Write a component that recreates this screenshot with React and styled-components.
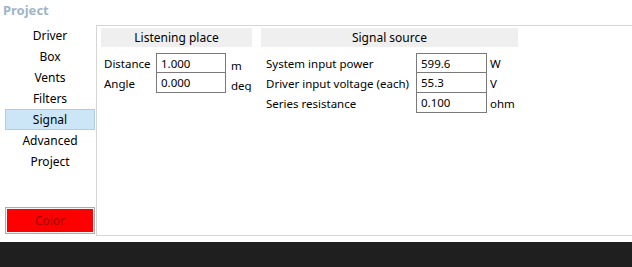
import React from 'react';
import styled, { createGlobalStyle } from 'styled-components';

const GlobalStyle = createGlobalStyle`
  html, body {
    margin: 0;
    padding: 0;
    background: #ffffff;
  }
  body {
    font-family: "Noto Sans", "Open Sans", sans-serif;
    font-size: 11.5px;
    color: #000;
  }
`;

const listening = [
  { label: 'Distance', value: '1.000', unit: 'm' },
  { label: 'Angle', value: '0.000', unit: 'deg' },
];

const source = [
  { label: 'System input power', value: '599.6', unit: 'W' },
  { label: 'Driver input voltage (each)', value: '55.3', unit: 'V' },
  { label: 'Series resistance', value: '0.100', unit: 'ohm' },
];

const navItems = ['Driver', 'Box', 'Vents', 'Filters', 'Signal', 'Advanced', 'Project'];

export default function App() {
  const [active, setActive] = React.useState('Signal');

  return (
    <>
      <GlobalStyle />
      <Window>
        <Title>Project</Title>
        <Body>
          <Sidebar>
            <NavList>
              {navItems.map((item) => (
                <NavItem key={item} $active={item === active} onClick={() => setActive(item)}>
                  {item}
                </NavItem>
              ))}
            </NavList>
            <ColorButton>Color</ColorButton>
          </Sidebar>
          <Panel>
            <Group $cols="55px 70px 26px">
              <GroupHeader>Listening place</GroupHeader>
              {listening.map((row, i) => (
                <React.Fragment key={row.label}>
                  <Label $pad={3}>{row.label}</Label>
                  <Field $first={i === 0}>{row.value}</Field>
                  <Unit $pad={5} $drop={4} $clip={19}>{row.unit}</Unit>
                </React.Fragment>
              ))}
            </Group>
            <Group $cols="155px 71px 31px">
              <GroupHeader>Signal source</GroupHeader>
              {source.map((row, i) => (
                <React.Fragment key={row.label}>
                  <Label $pad={5}>{row.label}</Label>
                  <Field $first={i === 0}>{row.value}</Field>
                  <Unit $pad={3} $drop={2} $clip={20}>{row.unit}</Unit>
                </React.Fragment>
              ))}
            </Group>
          </Panel>
        </Body>
        <Spacer />
        <Taskbar />
      </Window>
    </>
  );
}

const Window = styled.div`
  width: 632px;
  height: 267px;
  display: flex;
  flex-direction: column;
  background: #ffffff;
  overflow: hidden;
`;

const Title = styled.div`
  height: 25px;
  padding: 1px 0 0 3px;
  box-sizing: border-box;
  font-size: 13px;
  font-weight: 700;
  color: #9fb4c9;
  line-height: 18px;
`;

const Body = styled.div`
  height: 211px;
  display: flex;
`;

const Sidebar = styled.div`
  width: 96px;
  padding: 0 1px 2px 5px;
  box-sizing: border-box;
  display: flex;
  flex-direction: column;
  justify-content: space-between;
`;

const NavList = styled.div`
  display: flex;
  flex-direction: column;
`;

const NavItem = styled.div`
  height: 21px;
  box-sizing: border-box;
  display: flex;
  align-items: center;
  justify-content: center;
  line-height: 1;
  font-size: 12px;
  cursor: pointer;
  border: 1px solid ${(p) => (p.$active ? '#a9cdea' : 'transparent')};
  background: ${(p) => (p.$active ? '#cde6f7' : 'transparent')};
`;

const ColorButton = styled.button`
  height: 27px;
  width: 90px;
  padding: 0;
  border: 1px solid #adadad;
  box-shadow: inset 0 0 0 1px #f4f4f4;
  background: #ff0000;
  color: #a00000;
  font-family: inherit;
  font-size: 12px;
`;

const Panel = styled.div`
  flex: 1;
  border: 1px solid #d6d6d6;
  border-right: none;
  padding: 2px 0 0 4px;
  display: flex;
  align-items: flex-start;
  gap: 9px;
  background: #ffffff;
`;

const Group = styled.div`
  display: grid;
  grid-template-columns: ${(p) => p.$cols};
  grid-template-rows: 25px;
  grid-auto-rows: 20px;
`;

const GroupHeader = styled.div`
  grid-column: 1 / -1;
  align-self: start;
  height: 19px;
  background: #efefef;
  display: flex;
  align-items: center;
  justify-content: center;
  line-height: 1;
  font-size: 12px;
`;

const Label = styled.div`
  padding-left: ${(p) => p.$pad}px;
  display: flex;
  align-items: center;
  white-space: nowrap;
`;

const Field = styled.div`
  border: 1px solid #7a7a7a;
  margin-top: ${(p) => (p.$first ? 0 : -1)}px;
  padding-left: 4px;
  display: flex;
  align-items: center;
  background: #ffffff;
`;

const Unit = styled.div`
  padding: ${(p) => p.$drop}px 0 0 ${(p) => p.$pad}px;
  height: ${(p) => p.$clip}px;
  box-sizing: border-box;
  overflow: hidden;
  line-height: 17px;
  white-space: nowrap;
`;

const Spacer = styled.div`
  height: 6px;
`;

const Taskbar = styled.div`
  flex: 1;
  background: #1f1f1f;
`;
